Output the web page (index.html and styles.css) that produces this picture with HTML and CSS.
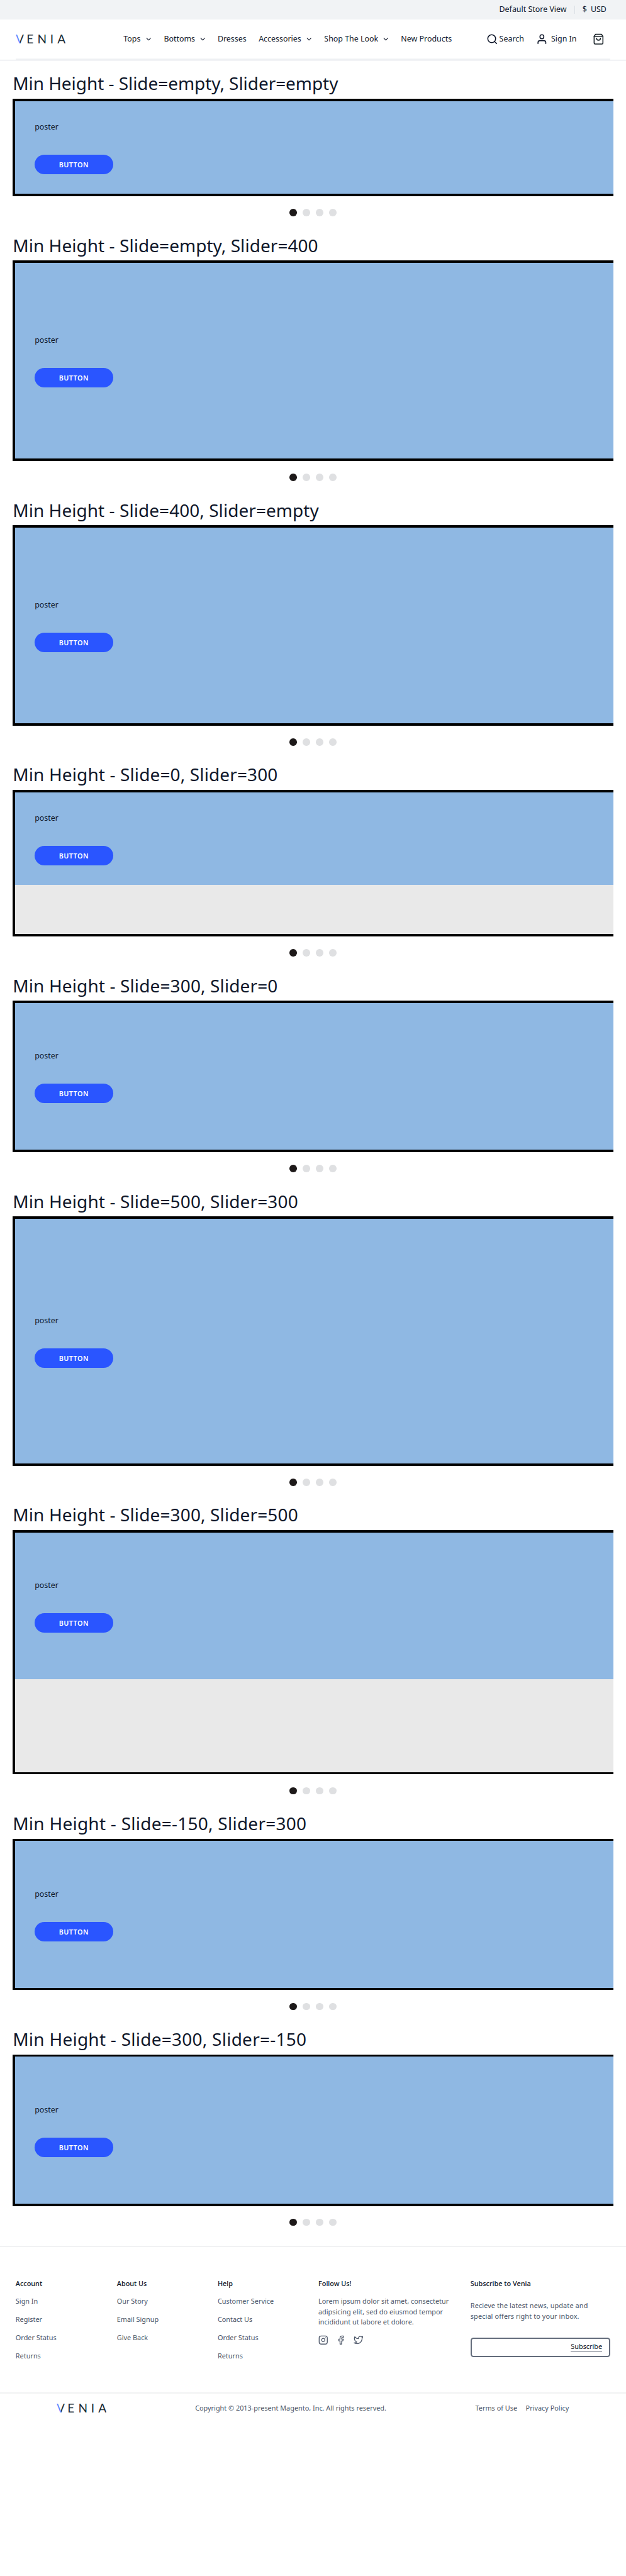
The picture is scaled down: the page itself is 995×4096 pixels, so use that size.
FILE: index.html
```html
<!DOCTYPE html>
<html lang="en">
<head>
<meta charset="utf-8">
<title>Min Height - Venia</title>
<link rel="stylesheet" href="styles.css">
</head>
<body>
<svg class="defs" width="0" height="0" aria-hidden="true">
  <defs>
    <linearGradient id="v-fill" x1="0" x2="1" y1="0" y2="0"><stop offset=".5" stop-color="#5b84ff"/><stop offset=".5" stop-color="#1c2b33"/></linearGradient>
    <symbol id="chevron" viewBox="0 0 24 24"><polyline points="6 9 12 15 18 9"/></symbol>
    <symbol id="logo" viewBox="0 0 102 20"><text y="18.7" x="0" fill="url(#v-fill)">V</text><text y="18.7" x="22.3 44.5 70.6 85.2" fill="#1c2b33">ENIA</text></symbol>
  </defs>
</svg>

<div class="topbar">
  <span class="store">Default Store View</span>
  <span class="currency"><span>$</span><span>USD</span></span>
</div>
<header class="header">
  <svg class="logo"><use href="#logo"/></svg>
  <nav class="nav">
    <a class="w-tops">Tops <svg class="chev"><use href="#chevron"/></svg></a>
    <a class="w-bottoms">Bottoms <svg class="chev"><use href="#chevron"/></svg></a>
    <a class="w-dresses">Dresses</a>
    <a class="w-accessories">Accessories <svg class="chev"><use href="#chevron"/></svg></a>
    <a class="w-look">Shop The Look <svg class="chev"><use href="#chevron"/></svg></a>
    <a>New Products</a>
  </nav>
  <div class="actions">
    <a class="search"><svg class="icon" viewBox="0 0 24 24"><circle cx="11" cy="11" r="8"/><line x1="21" y1="21" x2="16.65" y2="16.65"/></svg>Search</a>
    <a class="signin"><svg class="icon" viewBox="0 0 24 24"><path d="M20 21v-2a4 4 0 0 0-4-4H8a4 4 0 0 0-4 4v2"/><circle cx="12" cy="7" r="4"/></svg>Sign In</a>
    <svg class="icon" viewBox="0 0 24 24"><path d="M6 2L3 6v14a2 2 0 0 0 2 2h14a2 2 0 0 0 2-2V6l-3-4z"/><line x1="3" y1="6" x2="21" y2="6"/><path d="M16 10a4 4 0 0 1-8 0"/></svg>
  </div>
</header>
<div class="header-band"></div>
<div class="header-line"></div>

<main class="main">
  <section>
    <h2>Min Height - Slide=empty, Slider=empty</h2>
    <div class="slider"><div class="slide"><p>poster</p><button>BUTTON</button></div></div>
    <div class="dots"><i class="on"></i><i></i><i></i><i></i></div>
  </section>
  <section>
    <h2 class="mixed">Min Height - Slide=empty, Slider=400</h2>
    <div class="slider"><div class="slide h400"><p>poster</p><button>BUTTON</button></div></div>
    <div class="dots"><i class="on"></i><i></i><i></i><i></i></div>
  </section>
  <section>
    <h2 class="mixed">Min Height - Slide=400, Slider=empty</h2>
    <div class="slider"><div class="slide h400"><p>poster</p><button>BUTTON</button></div></div>
    <div class="dots"><i class="on"></i><i></i><i></i><i></i></div>
  </section>
  <section>
    <h2 class="numeric">Min Height - Slide=0, Slider=300</h2>
    <div class="slider min300"><div class="slide"><p>poster</p><button>BUTTON</button></div><div class="rest"></div></div>
    <div class="dots"><i class="on"></i><i></i><i></i><i></i></div>
  </section>
  <section>
    <h2 class="numeric">Min Height - Slide=300, Slider=0</h2>
    <div class="slider"><div class="slide h300"><p>poster</p><button>BUTTON</button></div></div>
    <div class="dots"><i class="on"></i><i></i><i></i><i></i></div>
  </section>
  <section>
    <h2 class="numeric">Min Height - Slide=500, Slider=300</h2>
    <div class="slider"><div class="slide h500"><p>poster</p><button>BUTTON</button></div></div>
    <div class="dots"><i class="on"></i><i></i><i></i><i></i></div>
  </section>
  <section>
    <h2 class="numeric">Min Height - Slide=300, Slider=500</h2>
    <div class="slider min500"><div class="slide h300"><p>poster</p><button>BUTTON</button></div><div class="rest"></div></div>
    <div class="dots"><i class="on"></i><i></i><i></i><i></i></div>
  </section>
  <section>
    <h2 class="negative">Min Height - Slide=-150, Slider=300</h2>
    <div class="slider"><div class="slide h300"><p>poster</p><button>BUTTON</button></div></div>
    <div class="dots"><i class="on"></i><i></i><i></i><i></i></div>
  </section>
  <section>
    <h2 class="negative">Min Height - Slide=300, Slider=-150</h2>
    <div class="slider"><div class="slide h300"><p>poster</p><button>BUTTON</button></div></div>
    <div class="dots"><i class="on"></i><i></i><i></i><i></i></div>
  </section>
</main>

<footer class="footer">
  <div class="columns">
    <ul><li class="title">Account</li><li>Sign In</li><li>Register</li><li>Order Status</li><li>Returns</li></ul>
    <ul><li class="title">About Us</li><li>Our Story</li><li>Email Signup</li><li>Give Back</li></ul>
    <ul><li class="title">Help</li><li>Customer Service</li><li>Contact Us</li><li>Order Status</li><li>Returns</li></ul>
    <div class="follow">
      <div class="title">Follow Us!</div>
      <p>Lorem ipsum dolor sit amet, consectetur<br>adipsicing elit, sed do eiusmod tempor<br>incididunt ut labore et dolore.</p>
      <div class="social">
        <svg viewBox="0 0 24 24"><rect x="2" y="2" width="20" height="20" rx="5"/><path d="M16 11.37A4 4 0 1 1 12.63 8 4 4 0 0 1 16 11.37z"/><line x1="17.5" y1="6.5" x2="17.51" y2="6.5"/></svg>
        <svg viewBox="0 0 24 24"><path d="M18 2h-3a5 5 0 0 0-5 5v3H7v4h3v8h4v-8h3l1-4h-4V7a1 1 0 0 1 1-1h3z"/></svg>
        <svg viewBox="0 0 24 24"><path d="M23 3a10.9 10.9 0 0 1-3.14 1.53 4.48 4.48 0 0 0-7.86 3v1A10.66 10.66 0 0 1 3 4s-4 9 5 13a11.64 11.64 0 0 1-7 2c9 5 20 0 20-11.5a4.5 4.5 0 0 0-.08-.83A7.72 7.72 0 0 0 23 3z"/></svg>
      </div>
    </div>
    <div class="subscribe">
      <div class="title">Subscribe to Venia</div>
      <p>Recieve the latest news, update and<br>special offers right to your inbox.</p>
      <div class="field"><span>Subscribe</span></div>
    </div>
  </div>
  <div class="legal">
    <svg class="logo"><use href="#logo"/></svg>
    <span class="copy">Copyright © 2013-present Magento, Inc. All rights reserved.</span>
    <span class="terms">Terms of Use</span>
    <span class="privacy">Privacy Policy</span>
  </div>
</footer>
</body>
</html>
```
FILE: styles.css
```css
/* 1rem equals ten design pixels at this page scale */
html { font-size: 7.7734px; }
* { box-sizing: border-box; }
body {
  margin: 0;
  min-height: 4096px;
  background: #fff;
  color: #0f172a;
  font: 1.6rem/1.5 "Noto Sans", "Open Sans", sans-serif;
}
p, h2, ul { margin: 0; padding: 0; font-weight: 400; }
ul { list-style: none; }
svg { display: block; flex: none; fill: none; stroke: currentColor; stroke-width: 2; stroke-linecap: round; stroke-linejoin: round; }
.defs { position: absolute; }

.topbar {
  display: flex;
  align-items: center;
  justify-content: flex-end;
  height: 4rem;
  padding-right: 4rem;
  background: #f1f3f5;
}
.store { padding-right: 1.6rem; }
.currency {
  display: flex;
  align-items: center;
  gap: .8rem;
  height: 1.6rem;
  padding-left: 1.5rem;
  border-left: 1px solid #d9dde3;
}

.header { display: flex; align-items: center; height: 8rem; padding-left: 3.25rem; white-space: nowrap; }
.logo { width: 10.2rem; height: 2rem; stroke: none; font: 24.6px Lato, sans-serif; }
.nav { display: flex; gap: 2.3rem; width: 74.5rem; margin-left: 11.8rem; }
.nav a { display: flex; align-items: center; justify-content: space-between; }
.w-tops { width: 5.95rem; }
.w-bottoms { width: 8.7rem; }
.w-dresses { width: 6.1rem; }
.w-accessories { width: 11.1rem; }
.w-look { width: 13.4rem; }
.chev { width: 1.6rem; height: 1.6rem; }
.actions { display: flex; align-items: center; margin-left: -.35rem; color: #172026; }
.actions a { display: flex; align-items: center; color: #0f172a; }
.icon { width: 2.4rem; height: 2.4rem; }
.search { width: 10.2rem; gap: .3rem; }
.signin { width: 11.6rem; gap: .7rem; }
.header-band { height: .2rem; margin: 0 3.2rem; background: #f1f3f5; }
.header-line { height: .1rem; min-height: 1px; background: #cfd2db; }

.main { padding: 0 2.6rem; }
h2 { padding: 3.69rem 0 .85rem; font-size: 3.6rem; line-height: 4.5rem; letter-spacing: -.005rem; }
.mixed { letter-spacing: .008rem; }
.numeric { letter-spacing: .018rem; }
.negative { letter-spacing: .034rem; }
section:first-child h2 { padding-top: 2.5rem; }
/* The frame is open on the right, where the next slide would start. */
.slider {
  display: flex;
  flex-direction: column;
  padding: .5rem 0 .5rem .5rem;
  background: #000;
}
.slide {
  display: flex;
  flex-direction: column;
  justify-content: center;
  min-height: 19rem;
  padding: 4rem;
  background: #8fb8e3;
}
.h300 { min-height: 30rem; }
.h400 { min-height: 40rem; }
.h500 { min-height: 50rem; }
.min300 { min-height: 30rem; }
.min500 { min-height: 50rem; }
.rest { flex: 1; background: #e9e9e9; }
.slide p { padding-top: .2rem; line-height: 2.4rem; }
button {
  width: 16rem;
  height: 4rem;
  margin-top: 4.4rem;
  padding: 0;
  border: 0;
  border-radius: 2rem;
  background: #2a55ff;
  color: #fff;
  font: 600 1.4rem/4rem "Noto Sans", sans-serif;
  letter-spacing: .05rem;
}
.dots { display: flex; justify-content: center; gap: 1.2rem; padding-top: 2.6rem; }
.dots i { width: 1.5rem; height: 1.5rem; border-radius: 50%; background: #dfe0e2; }
.dots .on { background: #1d1919; }

.footer { margin-top: 4.1rem; border-top: 2px solid #f1f2f3; color: #4b5567; font-size: 1.4rem; line-height: 2.1rem; white-space: nowrap; }
.columns {
  display: grid;
  grid-template-columns: 20.7rem 20.6rem 20.6rem 31.1rem 28.6rem;
  height: 29.7rem;
  padding: 6.35rem 3.2rem 0;
}
.title { color: #0f172a; font-weight: 500; }
li + li, .follow p { margin-top: 1.6rem; }
.social { display: flex; gap: 1.6rem; margin-top: 1.65rem; }
.social svg { width: 2rem; height: 2rem; }
.subscribe p { margin-top: 2.5rem; letter-spacing: .015rem; }
.field {
  display: flex;
  align-items: center;
  justify-content: flex-end;
  height: 4rem;
  margin-top: 3.3rem;
  padding-right: 1.4rem;
  border: 2px solid #646d7c;
  border-radius: .6rem;
}
.field span { color: #0f172a; line-height: 1.6rem; border-bottom: 1px solid #5a6272; }
.legal { display: flex; align-items: center; height: 6.2rem; padding-left: 11.6rem; border-top: 2px solid #f1f2f3; }
.copy { width: 57.3rem; margin-left: 18.1rem; }
.terms { width: 10.3rem; }
```
